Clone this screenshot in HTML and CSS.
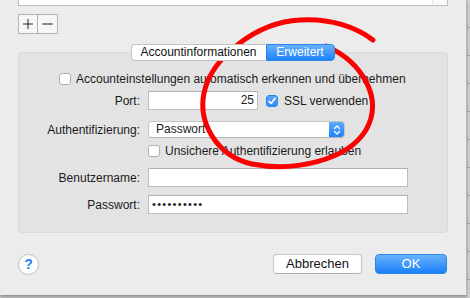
FILE: index.html
```html
<!DOCTYPE html>
<html lang="de">
<head>
<meta charset="utf-8">
<title>Account</title>
<link rel="stylesheet" href="styles.css">
</head>
<body>
<div class="window">
  <div class="list"><div class="list-scroll"></div></div>
  <div class="pm">
    <span class="pm-btn"><svg width="20" height="20" viewBox="0 0 20 20"><path d="M10 4.5v11M4.5 10h11" stroke="#222" stroke-width="1.1" fill="none"/></svg></span>
    <span class="pm-btn"><svg width="20" height="20" viewBox="0 0 20 20"><path d="M4.5 10h11" stroke="#222" stroke-width="1.1" fill="none"/></svg></span>
  </div>
  <div class="tabs">
    <span class="tab">Accountinformationen</span><span class="tab active">Erweitert</span>
  </div>
  <div class="group">
    <div class="row row-auto">
      <span class="cb"></span><span class="txt">Accounteinstellungen automatisch erkennen und übernehmen</span>
    </div>
    <div class="row row-port">
      <span class="lbl">Port:</span>
      <span class="field port">25</span>
      <span class="cb checked"><svg width="12" height="12" viewBox="0 0 12 12"><path d="M3 6.3l2.1 2.2 4-5.2" stroke="#fff" stroke-width="1.7" fill="none" stroke-linecap="round" stroke-linejoin="round"/></svg></span>
      <span class="txt">SSL verwenden</span>
    </div>
    <div class="row row-auth">
      <span class="lbl">Authentifizierung:</span>
      <span class="popup"><span class="popup-text">Passwort</span><span class="stepper"><svg width="14" height="16" viewBox="0 0 14 16"><path d="M4.5 6.5l2.5-2.5 2.5 2.5M4.5 9.5l2.5 2.5 2.5-2.5" stroke="#fff" stroke-width="1.3" fill="none" stroke-linecap="round" stroke-linejoin="round"/></svg></span></span>
    </div>
    <div class="row row-unsafe">
      <span class="lbl"></span>
      <span class="cb"></span><span class="txt">Unsichere Authentifizierung erlauben</span>
    </div>
    <div class="row row-user">
      <span class="lbl">Benutzername:</span>
      <span class="field wide"></span>
    </div>
    <div class="row row-pass">
      <span class="lbl">Passwort:</span>
      <span class="field wide dots">••••••••••</span>
    </div>
  </div>
  <div class="footer">
    <span class="help">?</span>
    <span class="spacer"></span>
    <span class="btn">Abbrechen</span>
    <span class="btn primary">OK</span>
  </div>
  <svg class="mark" width="468" height="295" viewBox="0 0 468 295">
    <path d="M326 46 C362 62 384 98 366 130 C347 161 293 172 252 164 C216 156 198 122 204 93 C212 56 258 22 300 20 C330 18 356 27 373 40" stroke="#fb0000" stroke-width="5" fill="none" stroke-linecap="round"/>
  </svg>
</div>
</body>
</html>
```
FILE: styles.css
```css
html, body {
  margin: 0;
  padding: 0;
}
body {
  width: 470px;
  height: 298px;
  background: repeating-linear-gradient(180deg, #d4d4d4 0, #d4d4d4 27px, #a9a9a9 27px, #a9a9a9 28px);
  font-family: "Liberation Sans", Arial, sans-serif;
  font-size: 12px;
  color: #1b1b1b;
}
.window {
  position: relative;
  width: 467px;
  height: 295px;
  box-sizing: border-box;
  background: #ececec;
  border-right: 1px solid #b8b8b8;
  box-shadow: 0 2px 3px rgba(0, 0, 0, 0.35);
  padding: 0 19px 0 18px;
  overflow: hidden;
}
.list {
  height: 6px;
  box-sizing: border-box;
  width: 430px;
  background: #fff;
  border: 1px solid #bdbdbd;
  border-top: none;
  display: flex;
  justify-content: flex-end;
}
.list-scroll {
  width: 14px;
  background: #fafafa;
  border-left: 1px solid #e6e6e6;
}
.pm {
  display: flex;
  margin-top: 8px;
}
.pm-btn {
  width: 20px;
  height: 20px;
  box-sizing: border-box;
  background: #f6f6f6;
  border: 1px solid #b4b4b4;
  display: flex;
  align-items: center;
  justify-content: center;
}
.pm-btn + .pm-btn {
  border-left: none;
}
.pm-btn svg {
  display: block;
}
.tabs {
  position: relative;
  z-index: 1;
  display: flex;
  justify-content: center;
  margin-top: 10px;
}
.tab {
  height: 17px;
  box-sizing: border-box;
  line-height: 15px;
  background: #fff;
  border: 1px solid #c3c3c3;
  border-radius: 4px 0 0 4px;
  border-right: none;
  width: 135px;
  text-align: center;
  color: #111;
}
.tab.active {
  width: 69px;
  border: 1px solid #2b86f0;
  border-radius: 0 4px 4px 0;
  background: linear-gradient(#67b0fb, #1d84fa);
  color: #fff;
}
.group {
  margin-top: -9px;
  width: 430px;
  height: 181px;
  box-sizing: border-box;
  background: #e3e3e3;
  border: 1px solid #dadada;
  border-radius: 4px;
  padding-top: 19px;
  display: flex;
  flex-direction: column;
}
.row {
  display: flex;
  align-items: center;
}
.lbl {
  width: 121px;
  text-align: right;
  margin-right: 8px;
  flex: none;
}
.txt {
  white-space: nowrap;
}
.cb {
  flex: none;
  width: 12px;
  height: 12px;
  box-sizing: border-box;
  background: #fff;
  border: 1px solid #b0b0b0;
  border-radius: 3px;
  margin-right: 5px;
}
.cb.checked {
  background: linear-gradient(#58a8fc, #2a8cfa);
  border-color: #2f87ec;
}
.cb.checked svg {
  display: block;
  margin: -1px;
}
.row-auto {
  height: 14px;
  padding-left: 40px;
}
.row-port {
  height: 19px;
  margin-top: 5px;
}
.row-port .cb {
  margin-left: 8px;
  margin-right: 6px;
}
.field {
  height: 19px;
  box-sizing: border-box;
  background: #fff;
  border: 1px solid #bcbcbc;
  border-top-color: #b0b0b0;
  line-height: 17px;
  padding: 0 3px;
}
.port {
  width: 110px;
  text-align: right;
}
.wide {
  width: 260px;
}
.dots {
  letter-spacing: 1.3px;
  font-size: 11px;
}
.row-auth {
  height: 17px;
  margin-top: 11px;
}
.popup {
  width: 197px;
  height: 17px;
  box-sizing: border-box;
  background: #fff;
  border: 1px solid #c6c6c6;
  border-bottom-color: #b2b2b2;
  border-radius: 4px;
  display: flex;
  overflow: hidden;
}
.popup-text {
  flex: 1;
  line-height: 15px;
  padding-left: 7px;
}
.stepper {
  width: 15px;
  background: linear-gradient(#5eaafc, #1f83f9);
  display: flex;
  align-items: center;
  justify-content: center;
}
.stepper svg {
  display: block;
}
.row-unsafe {
  height: 12px;
  margin-top: 7px;
}
.row-user {
  height: 19px;
  margin-top: 11px;
}
.row-pass {
  height: 19px;
  margin-top: 8px;
}
.footer {
  display: flex;
  align-items: center;
  margin-top: 21px;
  height: 20px;
}
.help {
  width: 21px;
  height: 21px;
  box-sizing: border-box;
  border-radius: 50%;
  background: #fff;
  border: 1px solid #bdbdbd;
  color: #1a7ff9;
  font-size: 14px;
  font-weight: bold;
  text-align: center;
  line-height: 19px;
}
.spacer {
  flex: 1;
}
.btn {
  width: 89px;
  height: 20px;
  box-sizing: border-box;
  background: #fff;
  border: 1px solid #c6c6c6;
  border-bottom-color: #b0b0b0;
  border-radius: 4px;
  font-size: 13px;
  text-align: center;
  line-height: 18px;
  color: #111;
}
.btn.primary {
  width: 72px;
  margin-left: 13px;
  background: linear-gradient(#6ab2fb, #1a80f9);
  border-color: #2d84ec;
  color: #fff;
}
.mark {
  position: absolute;
  left: 0;
  top: 0;
  pointer-events: none;
}
```
